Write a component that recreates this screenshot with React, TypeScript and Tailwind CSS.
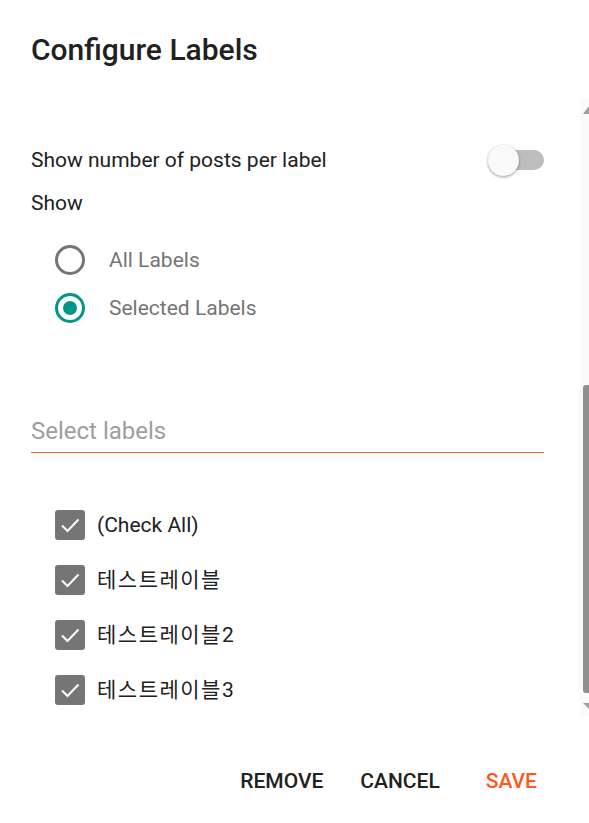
import React from "react";

const labels = ["(Check All)", "테스트레이블", "테스트레이블2", "테스트레이블3"];

function Radio({ checked, label }: { checked?: boolean; label: string }) {
  return (
    <div className="flex items-center h-[48px] pl-[24px]">
      {checked ? (
        <span className="w-[30px] h-[30px] rounded-full border-[3px] border-[#009688] flex items-center justify-center">
          <span className="w-[14px] h-[14px] rounded-full bg-[#009688]" />
        </span>
      ) : (
        <span className="w-[30px] h-[30px] rounded-full border-[3px] border-[#757575]" />
      )}
      <span className="ml-[24px] text-[21px] leading-[24px] text-[#757575]">{label}</span>
    </div>
  );
}

function CheckRow({ label, wide }: { label: string; wide?: boolean }) {
  return (
    <div className="flex items-center h-[55px] pl-[24px]">
      <span className="w-[30px] h-[30px] rounded-[3px] bg-[#757575] flex items-center justify-center">
        <svg width="30" height="30" viewBox="0 0 30 30" fill="none">
          <path d="M7 15.5L12.5 21L23.5 9.5" stroke="#fff" strokeWidth="2" />
        </svg>
      </span>
      <span
        className={
          wide
            ? "ml-[12px] text-[21px] leading-[24px] tracking-[1.5px] text-[#212121]"
            : "ml-[12px] text-[21px] leading-[24px] text-[#212121]"
        }
      >
        {label}
      </span>
    </div>
  );
}

export default function App() {
  return (
    <div
      className="w-[589px] h-[823px] bg-white flex flex-col overflow-hidden"
      style={{ fontFamily: "Roboto, 'Noto Sans CJK KR', sans-serif" }}
    >
      {/* Header */}
      <div className="h-[99px] pl-[31px] pt-[34px]">
        <h2 className="text-[30px] leading-[32px] font-medium text-[#212121]">Configure Labels</h2>
      </div>

      {/* Scrollable body */}
      <div className="h-[617px] flex">
        <div className="flex-1 pl-[31px] pr-[36px] flex flex-col">
          <div className="mt-[46px] flex items-center justify-between h-[30px]">
            <span className="text-[21px] leading-[24px] text-[#212121]">Show number of posts per label</span>
            <div className="relative w-[56px] h-[30px] flex items-center">
              <span className="ml-[3px] w-[53px] h-[20px] rounded-full bg-[#bdbdbd]" />
              <span className="absolute left-0 top-0 w-[31px] h-[31px] rounded-full bg-[#fafafa] shadow-[0_1px_3px_rgba(0,0,0,0.4)]" />
            </div>
          </div>
          <div className="mt-[16px] text-[21px] leading-[24px] text-[#212121]">Show</div>
          <div className="mt-[21px] flex flex-col">
            <Radio label="All Labels" />
            <Radio checked label="Selected Labels" />
          </div>
          <div className="mt-[85px] border-b border-[#ec6a44] pb-[6px]">
            <span className="text-[24px] leading-[28px] text-[#9e9e9e]">Select labels</span>
          </div>
          <div className="mt-[44px] flex flex-col">
            {labels.map((l, i) => (
              <CheckRow key={l} label={l} wide={i > 0} />
            ))}
          </div>
        </div>

        {/* Scrollbar */}
        <div className="w-[9px] bg-[#fafafa] flex flex-col pl-[3px]">
          <svg className="mt-[7px]" width="6" height="8" viewBox="0 0 6 8">
            <path d="M0 8L6 0L6 8Z" fill="#a0a0a0" />
          </svg>
          <div className="h-[271px]" />
          <div className="h-[308px] rounded-l-[3px] bg-[#8f8f8f]" />
          <svg className="mt-[10px]" width="6" height="6" viewBox="0 0 6 6">
            <path d="M0 0L6 0L6 6Z" fill="#a0a0a0" />
          </svg>
        </div>
      </div>

      {/* Footer */}
      <div className="flex-1 flex items-start justify-end pr-[52px] pt-[53px]">
        <button className="text-[21px] leading-[24px] font-medium text-[#212121]">REMOVE</button>
        <button className="ml-[37px] text-[21px] leading-[24px] font-medium text-[#212121]">CANCEL</button>
        <button className="ml-[46px] text-[21px] leading-[24px] font-medium text-[#ff5722]">SAVE</button>
      </div>
    </div>
  );
}
